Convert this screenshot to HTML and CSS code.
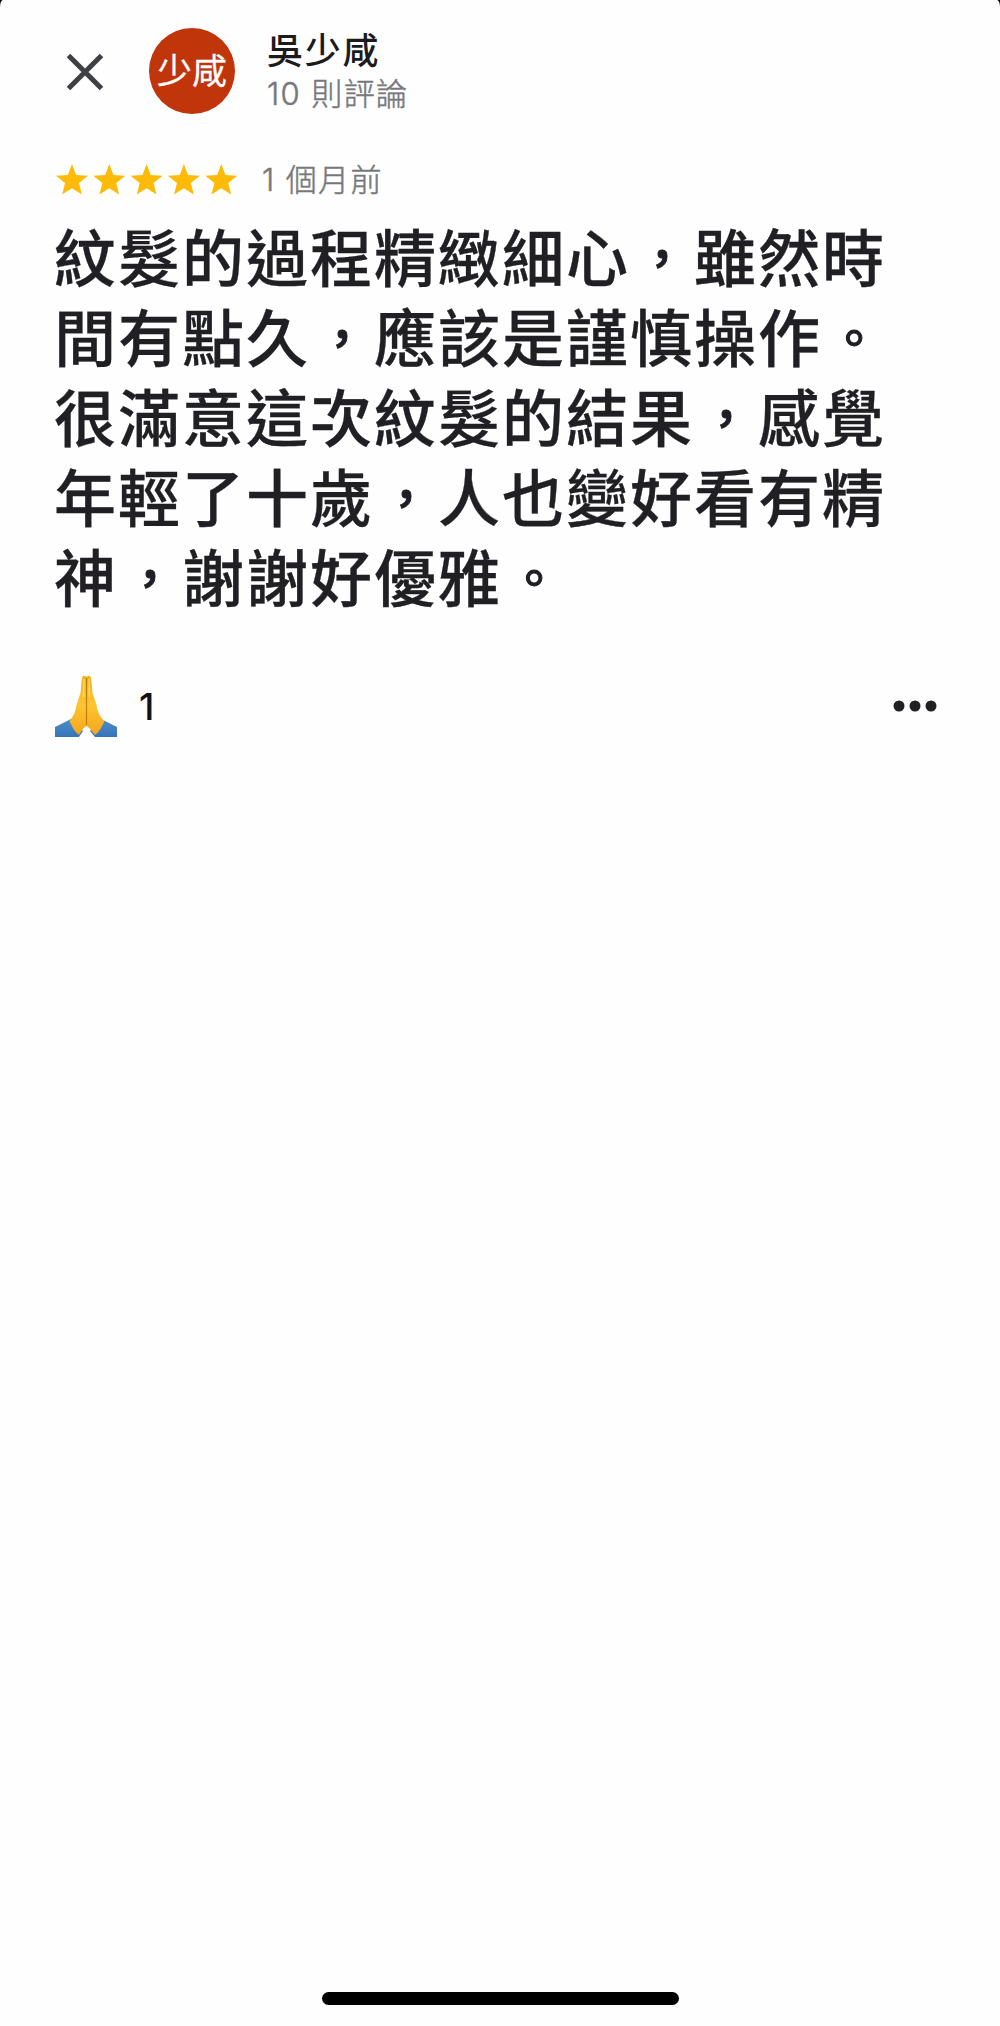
FILE: index.html
```html
<!DOCTYPE html>
<html lang="zh-Hant">
<head>
<meta charset="utf-8">
<title>評論</title>
<link rel="stylesheet" href="styles.css">
</head>
<body>
<main class="screen">
  <header class="header">
    <button class="close" aria-label="關閉"><svg width="40" height="40" viewBox="0 0 40 40"><path d="M3.500 3.500 36.500 36.500M36.500 3.500 3.500 36.500"/></svg></button>
    <div class="avatar">少咸</div>
    <div class="author">
      <div class="name">吳少咸</div>
      <div class="count">10 則評論</div>
    </div>
  </header>
  <div class="meta">
    <svg class="stars" width="182" height="34" viewBox="0 0 182 34">
      <defs><path id="star" d="M16 1 20.100 12 32 12.700 22.900 20 25.900 31.500 16 25.200 6.100 31.500 9.100 20 0 12.700 11.900 12Z"/></defs>
      <use href="#star"/><use href="#star" x="37.300"/><use href="#star" x="74.600"/><use href="#star" x="111.900"/><use href="#star" x="149.300"/>
    </svg>
    <span class="date">1 個月前</span>
  </div>
  <div class="review">
    <div>紋髮的過程精緻細心<span class="mark">，</span>雖然時</div>
    <div>間有點久<span class="mark">，</span>應該是謹慎操作<span class="mark">。</span></div>
    <div>很滿意這次紋髮的結果<span class="mark">，</span>感覺</div>
    <div>年輕了十歲<span class="mark">，</span>人也變好看有精</div>
    <div>神<span class="mark">，</span>謝謝好優雅<span class="mark">。</span></div>
  </div>
  <div class="actions">
    <svg class="pray" width="64" height="64" viewBox="0 0 64 64">
      <defs>
        <linearGradient id="skin" x2="0" y2="1"><stop stop-color="#f0b01f"/><stop offset=".5" stop-color="#ffc52f"/><stop offset="1" stop-color="#f2a51d"/></linearGradient>
        <linearGradient id="sleeve" x2="0" y2="1"><stop stop-color="#4d8dcb"/><stop offset="1" stop-color="#3674b8"/></linearGradient>
      </defs>
      <path fill="url(#sleeve)" d="M0 53 16 45 28 57 24 63H0ZM62 53 46 45 35 57 40 63H62Z"/>
      <path fill="url(#skin)" d="M31.500 3C29 .5 27 2 26.700 6L25.500 19 21.500 31C20.500 38 18 43 14.500 47 17 53 20 58 24 61 27 56 29 53 31.500 52 34 53 36 56 40 61 44 58 47 53 49.500 47 45 43 42.500 38 41.500 31L37.500 19 36.300 6C36 2 34 .5 31.500 3Z"/>
      <path class="crease" d="M31.500 4V51"/>
      <path class="finger" d="M29 5 28.500 23M34 5 34.500 23"/>
    </svg>
    <span class="likes">1</span>
    <svg class="more" width="44" height="12" viewBox="0 0 44 12"><circle cx="6" cy="6" r="5.500"/><circle cx="22" cy="6" r="5.500"/><circle cx="38" cy="6" r="5.500"/></svg>
  </div>
  <div class="home-bar"></div>
</main>
</body>
</html>
```
FILE: styles.css
```css
* { box-sizing: border-box; }
html { background: #000; }
body { margin: 0; font-family: Inter, "Noto Sans CJK TC", sans-serif; }
.screen { display: flex; flex-direction: column; height: 2026px; padding: 28px 55px 21px; background: #fefefe; border-radius: 3px 3px 0 0 / 7px 7px 0 0; }
.header { display: flex; align-items: flex-start; height: 86px; }
.close { display: block; width: 40px; height: 40px; margin: 24px 0 0 10px; padding: 0; border: 0; background: none; }
.close svg { display: block; fill: none; stroke: #3f4045; stroke-width: 5; }
.avatar { width: 86px; height: 86px; margin-left: 44px; border-radius: 50%; background: #c1350b; color: #fff; font-size: 35px; line-height: 86px; text-align: center; white-space: nowrap; -webkit-text-stroke: 0.3px #fff; }
.author { margin: 2px 0 0 32px; white-space: nowrap; }
.name { font-size: 36px; font-weight: 500; letter-spacing: 1.800px; line-height: 43px; color: #1b1b1d; }
.count, .date { font-size: 31px; font-weight: 300; letter-spacing: 1.400px; line-height: 42px; color: #77787c; white-space: nowrap; -webkit-text-stroke: 0.5px #77787c; }
.meta { display: flex; align-items: center; height: 42px; margin-top: 45px; }
.stars { display: block; margin-left: 1px; fill: #fdbb08; }
.date { margin-left: 24px; }
.review { margin: 14px 0 0 -1px; font-family: "Noto Sans CJK TC", sans-serif; font-size: 62px; font-weight: 500; letter-spacing: 2px; line-height: 80px; color: #202024; white-space: nowrap; -webkit-text-stroke: 0.3px #202024; }
.review > div { height: 80px; }
.mark { display: inline-block; width: 64px; font-size: 50px; letter-spacing: 0; line-height: 1; text-align: center; vertical-align: 5px; -webkit-text-stroke: 1px #202024; }
.actions { display: flex; align-items: center; height: 64px; margin-top: 59px; }
.pray { display: block; }
.crease { fill: none; stroke: #c67a16; stroke-width: 1.200; }
.finger { fill: none; stroke: #ffdc5b; stroke-width: 1.500; }
.likes { margin: 2px 0 0 20px; font-size: 37px; font-weight: 500; line-height: 44px; color: #111; }
.more { margin: 0 8px 0 auto; fill: #202022; }
.home-bar { width: 357px; height: 13px; margin: auto auto 0 267px; border-radius: 7px; background: #000; }
```
